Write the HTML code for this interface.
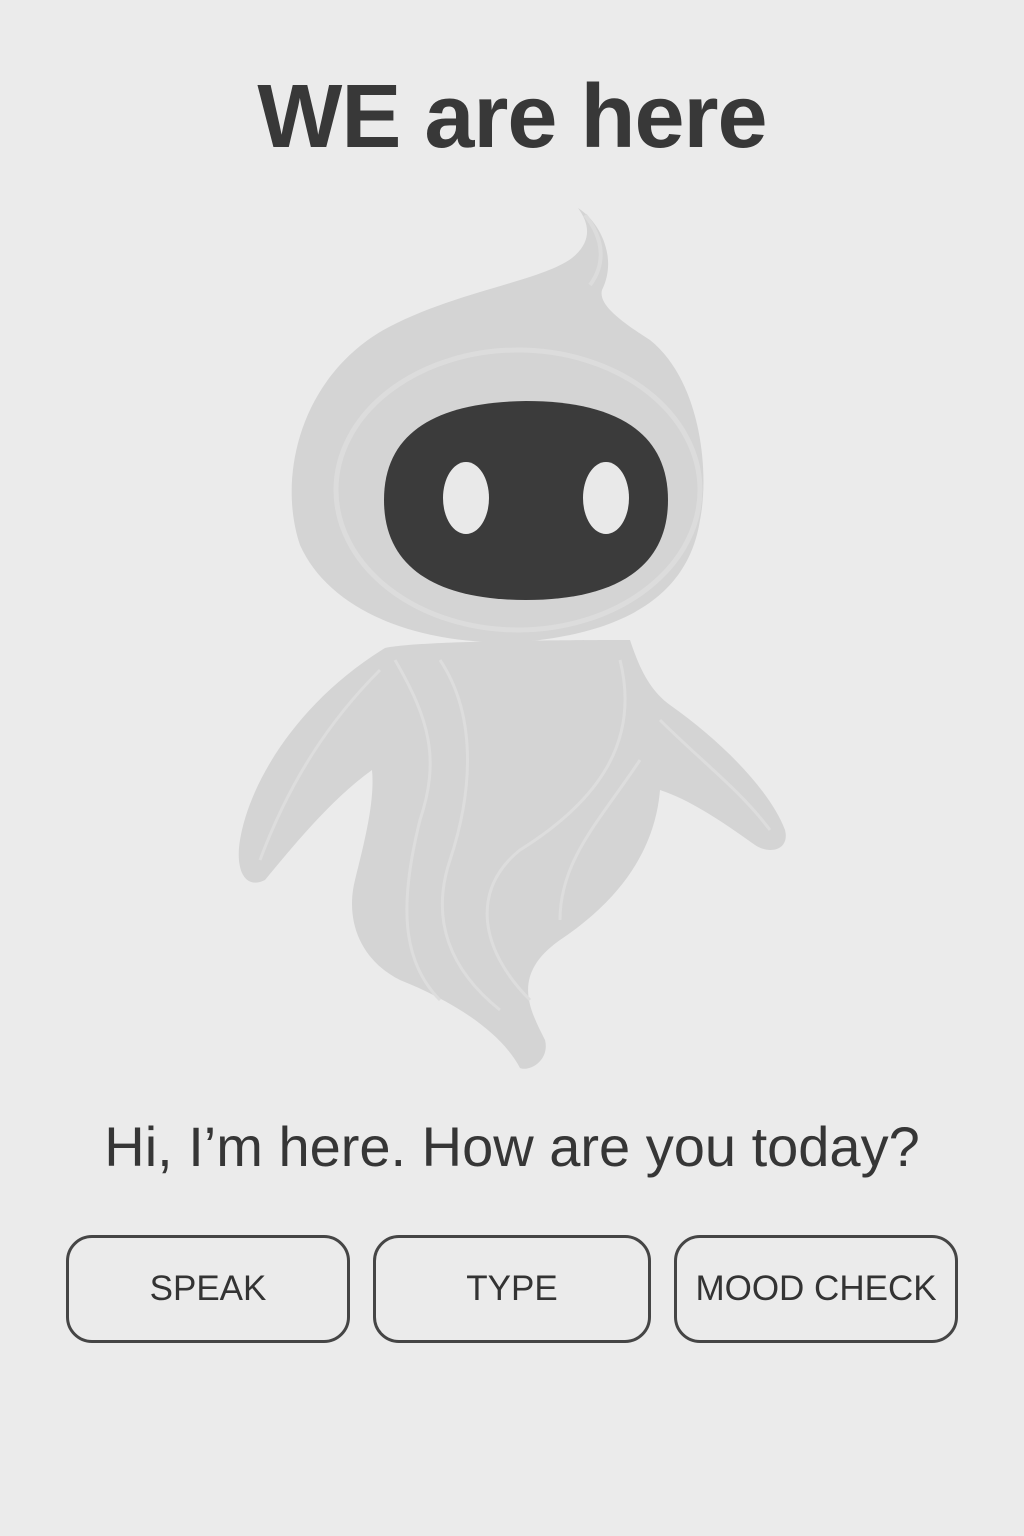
<!DOCTYPE html>
<html><head><meta charset="utf-8"><style>
html,body{margin:0;padding:0;}
body{width:1024px;height:1536px;background:#ebebeb;position:relative;overflow:hidden;font-family:"Liberation Sans",sans-serif;color:#333;}
h1{position:absolute;top:62px;left:0;width:1024px;text-align:center;margin:0;font-size:90px;font-weight:bold;line-height:110px;color:#383838;letter-spacing:-1px;}
.sub{position:absolute;top:1117px;left:0;width:1024px;text-align:center;font-size:56px;line-height:60px;color:#363636;}
.btn{position:absolute;top:1235px;border:3px solid #454545;border-radius:26px;box-sizing:border-box;height:108px;display:flex;align-items:center;justify-content:center;font-size:35px;color:#333;}
svg{position:absolute;left:0;top:0;}
</style></head><body>
<h1>WE are here</h1>
<svg width="1024" height="1536" viewBox="0 0 1024 1536">
<path d="M385,648 C420,640 600,640 630,640 C640,670 650,690 670,705 C720,740 770,790 785,830 C790,850 770,855 755,845 C720,820 690,800 660,790 C655,850 620,900 560,940 C510,975 530,1010 545,1040 C550,1060 530,1072 520,1068 C500,1030 450,1000 400,980 C360,960 345,920 355,880 C365,840 375,800 372,770 C330,800 290,850 265,880 C245,890 235,870 240,840 C250,780 300,700 385,648 Z" fill="#d4d4d4"/>
<g fill="none" stroke="#dddddd" stroke-width="3">
<path d="M395,660 C430,720 440,760 420,820 C400,900 400,960 440,1000"/>
<path d="M440,660 C480,720 470,800 450,860 C430,920 450,970 500,1010"/>
<path d="M620,660 C640,740 600,800 520,850 C470,890 480,950 530,1000"/>
<path d="M640,760 C600,820 560,860 560,920"/>
<path d="M660,720 C700,760 740,790 770,830"/>
<path d="M380,670 C330,720 290,780 260,860"/>
</g>
<path d="M578,208 C600,222 618,258 602,290 C598,305 622,322 650,340 C700,380 710,470 700,520 C690,585 640,632 520,642 C420,646 330,612 300,545 C278,480 298,382 380,332 C450,292 540,282 572,258 C592,242 590,224 578,208 Z" fill="#d4d4d4"/>
<ellipse cx="518" cy="490" rx="182" ry="140" fill="none" stroke="#dcdcdc" stroke-width="5"/>
<path d="M585,215 C605,240 605,265 590,285" fill="none" stroke="#dcdcdc" stroke-width="4"/>
<path d="M384,500 C384,430 440,402 526,401 C612,401 668,430 668,500 C668,570 612,600 526,600 C440,600 384,570 384,500 Z" fill="#3b3b3b"/>
<ellipse cx="466" cy="498" rx="23" ry="36" fill="#e9e9e9"/>
<ellipse cx="606" cy="498" rx="23" ry="36" fill="#e9e9e9"/>
</svg>
<div class="sub">Hi, I’m here. How are you today?</div>
<div class="btn" style="left:66px;width:284px;">SPEAK</div>
<div class="btn" style="left:373px;width:278px;">TYPE</div>
<div class="btn" style="left:674px;width:284px;">MOOD CHECK</div>
</body></html>
